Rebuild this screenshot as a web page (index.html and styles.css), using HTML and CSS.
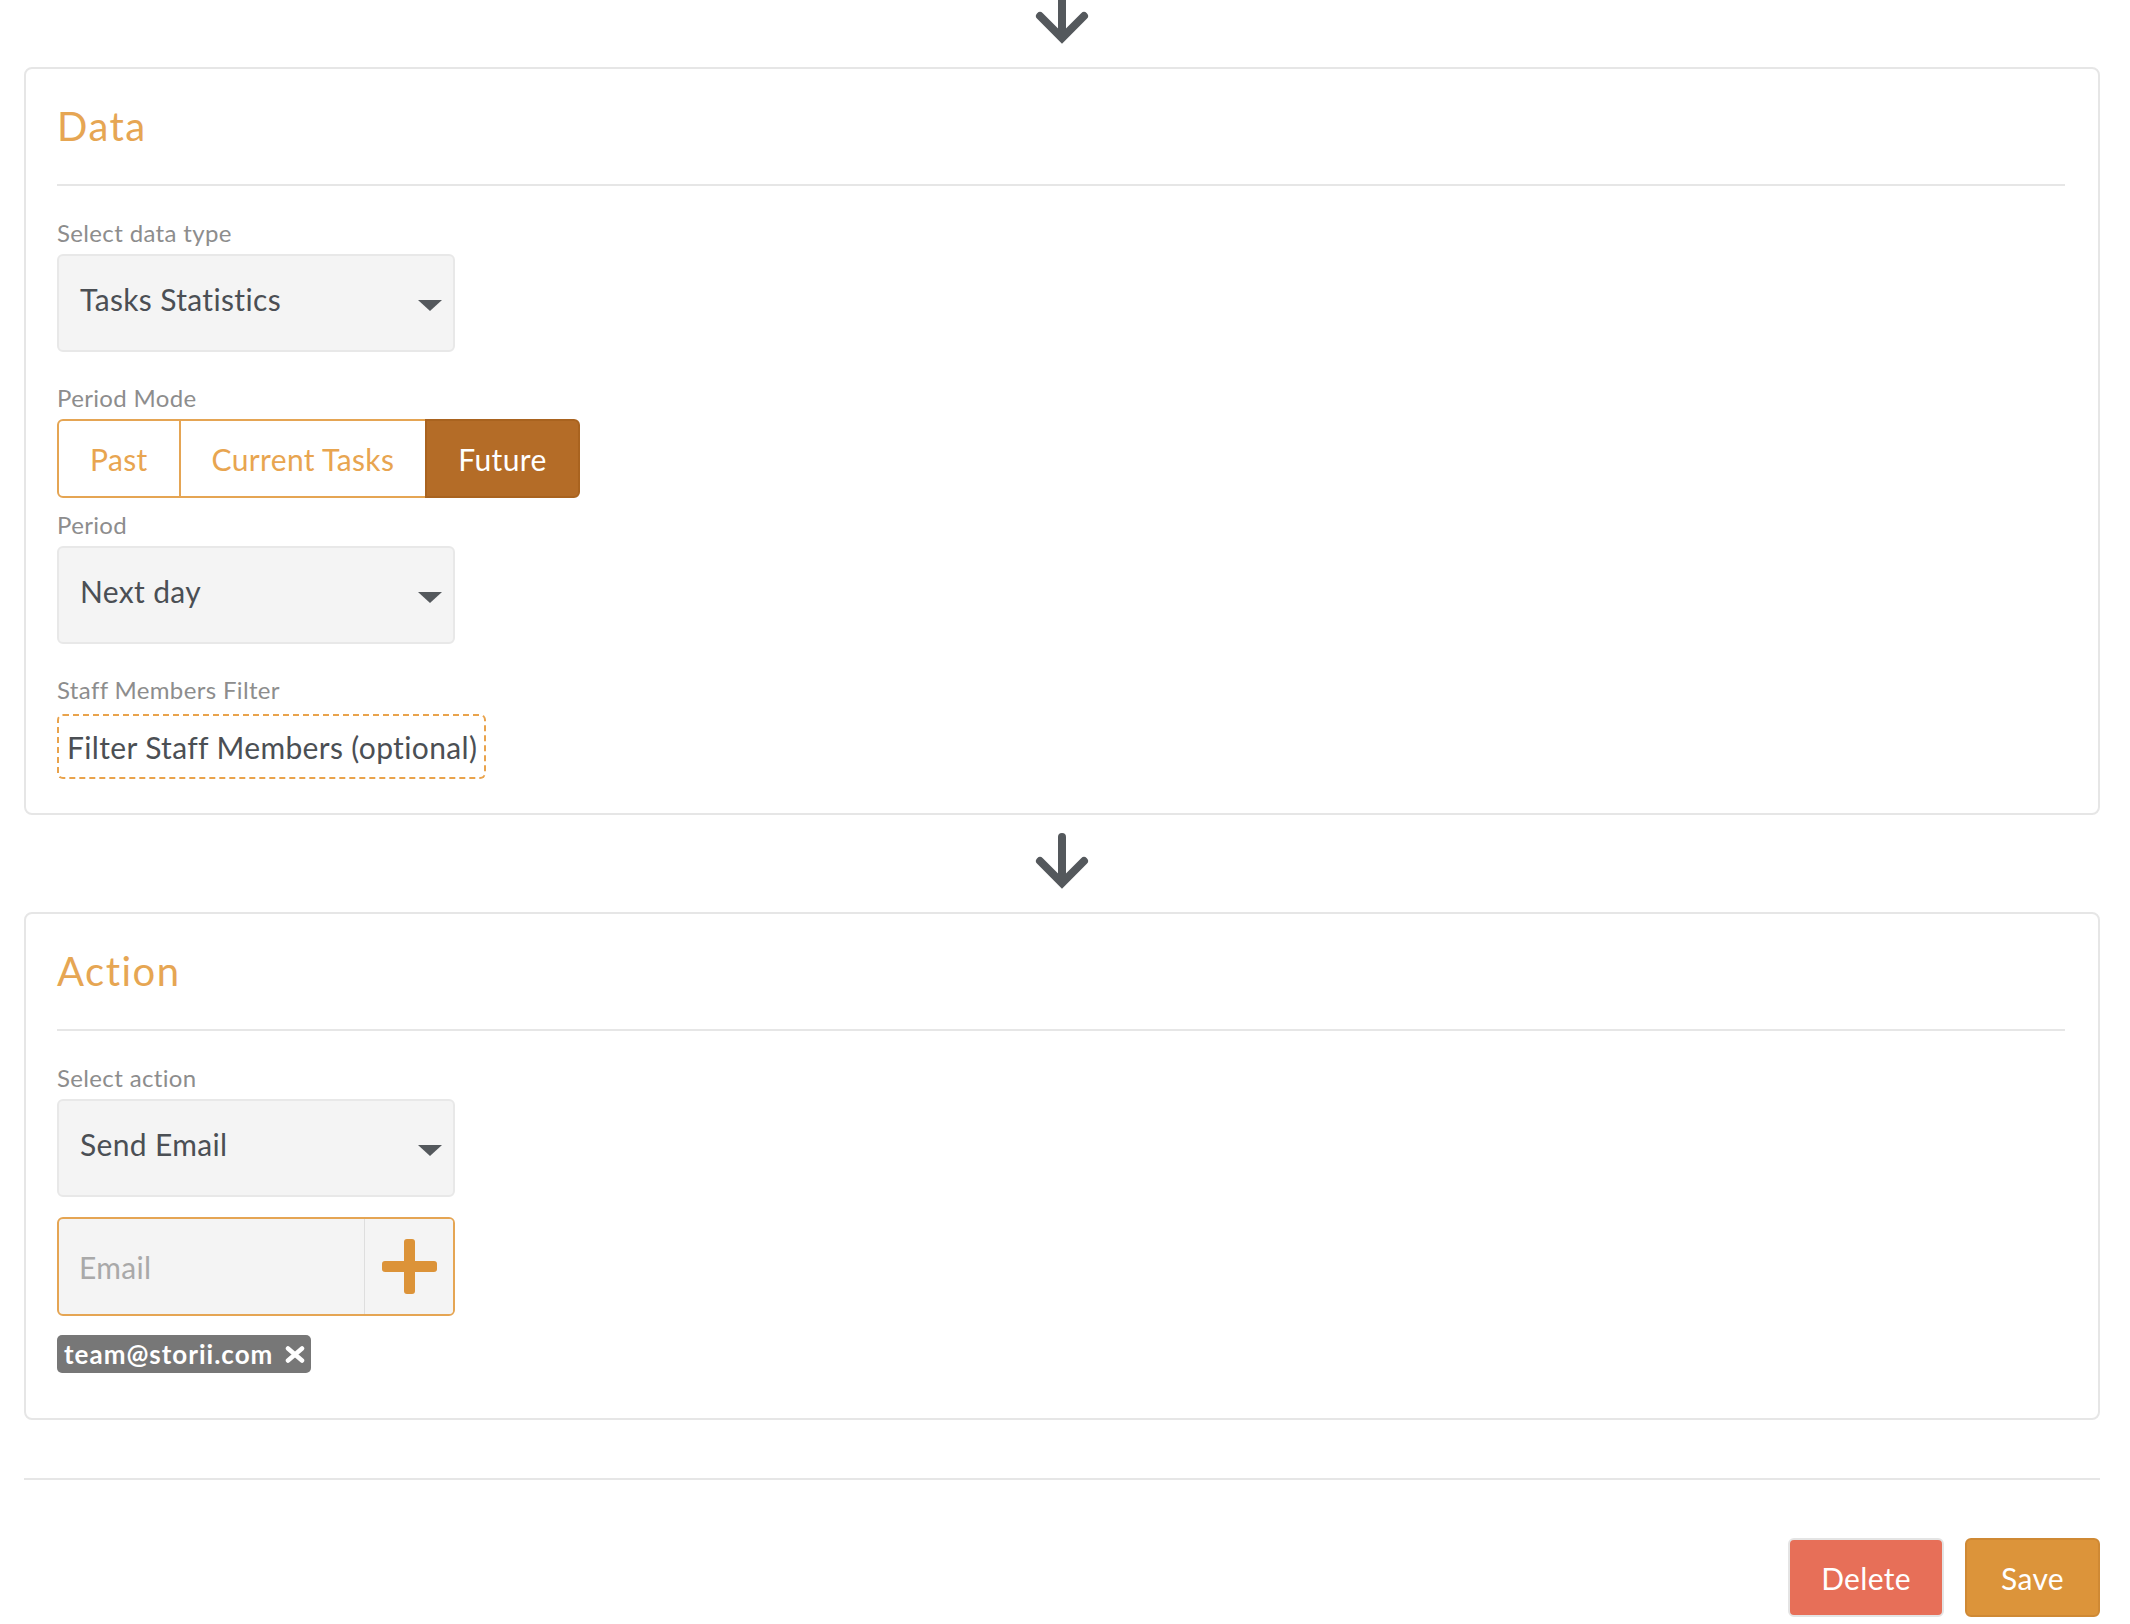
FILE: index.html
```html
<!DOCTYPE html>
<html lang="en">
<head>
  <meta charset="UTF-8" />
  <meta name="viewport" content="width=device-width, initial-scale=1.0"/>
  <title>Report Automation</title>
  <link rel="stylesheet" href="styles.css">
</head>
<body>
  <div class="page">

    <div class="flow-arrow first">
      <svg width="60" height="60" viewBox="0 0 60 60"><path d="M30 7 V50 M8 31 L30 53 L52 31" fill="none" stroke="#54585c" stroke-width="8" stroke-linecap="round" stroke-linejoin="miter"/></svg>
    </div>

    <div class="card">
      <h2 class="card-title">Data</h2>

      <div class="field">
        <label class="field-label">Select data type</label>
        <div class="select">
          <span class="select-value">Tasks Statistics</span>
          <span class="caret"></span>
        </div>
      </div>

      <div class="field field-mode">
        <label class="field-label">Period Mode</label>
        <div class="segmented">
          <button>Past</button>
          <button>Current Tasks</button>
          <button class="active">Future</button>
        </div>
      </div>

      <div class="field">
        <label class="field-label">Period</label>
        <div class="select">
          <span class="select-value">Next day</span>
          <span class="caret"></span>
        </div>
      </div>

      <div class="field">
        <label class="field-label">Staff Members Filter</label>
        <div class="staff-filter">Filter Staff Members (optional)</div>
      </div>
    </div>

    <div class="flow-arrow">
      <svg width="60" height="60" viewBox="0 0 60 60"><path d="M30 7 V50 M8 31 L30 53 L52 31" fill="none" stroke="#54585c" stroke-width="8" stroke-linecap="round" stroke-linejoin="miter"/></svg>
    </div>

    <div class="card">
      <h2 class="card-title">Action</h2>

      <div class="field">
        <label class="field-label">Select action</label>
        <div class="select">
          <span class="select-value">Send Email</span>
          <span class="caret"></span>
        </div>
        <div class="email-input">
          <input type="text" placeholder="Email">
          <button class="add-btn">
            <svg width="55" height="55" viewBox="0 0 55 55"><rect x="0" y="22" width="55" height="11" rx="3" fill="#dc9338"/><rect x="22" y="0" width="11" height="55" rx="3" fill="#dc9338"/></svg>
          </button>
        </div>
        <div class="tags">
          <span class="tag">team@storii.com
            <svg width="20" height="17" viewBox="0 0 20 17"><path d="M3 2.5 L17 14.5 M17 2.5 L3 14.5" stroke="#fff" stroke-width="4.5" stroke-linecap="round"/></svg>
          </span>
        </div>
      </div>
    </div>

    <hr class="footer-rule">

    <div class="footer-actions">
      <button class="btn btn-delete">Delete</button>
      <button class="btn btn-save">Save</button>
    </div>

  </div>
</body>
</html>
```

FILE: styles.css
```css
body {
  margin: 0;
  font-family: Lato, "Open Sans", sans-serif;
  letter-spacing: 0.022em;
  background-color: #ffffff;
  color: #4b4f54;
}

.page {
  margin: 0 30px 0 24px;
}

.flow-arrow {
  display: flex;
  justify-content: center;
  padding: 15px 0 22px;
}

.flow-arrow.first {
  margin-top: -30px;
}

.card {
  border: 2px solid #e6e6e6;
  border-radius: 8px;
  padding: 33px 33px 34px 31px;
}

.card-title {
  margin: 0 0 32px;
  padding-bottom: 34px;
  border-bottom: 2px solid #e6e6e6;
  font-size: 40px;
  line-height: 48px;
  font-weight: normal;
  letter-spacing: 1.5px;
  color: #e6a653;
}

.field {
  margin-bottom: 31px;
}

.field-mode {
  margin-bottom: 12px;
}

.card .field:last-child {
  margin-bottom: 0;
}

.field-label {
  display: block;
  font-size: 24px;
  line-height: 29px;
  color: #8d8d8d;
  margin-bottom: 7px;
}

.select {
  display: flex;
  align-items: center;
  justify-content: space-between;
  box-sizing: border-box;
  width: 398px;
  height: 98px;
  padding: 0 11px 0 21px;
  background-color: #f4f4f4;
  border: 2px solid #e8e8e8;
  border-radius: 6px;
  font-size: 30px;
  line-height: 36px;
}

.select-value {
  margin-bottom: 9px;
}

.caret {
  width: 0;
  height: 0;
  border-left: 12px solid transparent;
  border-right: 12px solid transparent;
  border-top: 11px solid #54585c;
  margin-top: 5px;
}

.segmented {
  display: flex;
  width: fit-content;
}

.segmented button {
  height: 79px;
  margin-left: -2px;
  padding: 0 31px;
  font-family: inherit;
  font-size: 30px;
  letter-spacing: inherit;
  color: #e8a550;
  background-color: #ffffff;
  border: 2px solid #e5a553;
}

.segmented button:first-child {
  margin-left: 0;
  border-radius: 6px 0 0 6px;
}

.segmented button:last-child {
  border-radius: 0 6px 6px 0;
}

.segmented button.active {
  background-color: #b46c27;
  border-color: #a9631f;
  color: #ffffff;
}

.staff-filter {
  display: flex;
  align-items: center;
  width: fit-content;
  box-sizing: border-box;
  height: 65px;
  margin-top: 10px;
  padding: 0 7px 0 8px;
  border: 2px dashed #e9a34c;
  border-radius: 6px;
  font-size: 30px;
}

.email-input {
  display: flex;
  box-sizing: border-box;
  width: 398px;
  height: 99px;
  margin-top: 20px;
  background-color: #f4f4f4;
  border: 2px solid #e5a553;
  border-radius: 6px;
  overflow: hidden;
}

.email-input input {
  flex: 1;
  min-width: 0;
  padding: 0 0 0 20px;
  border: none;
  outline: none;
  background-color: transparent;
  font-family: inherit;
  font-size: 30px;
  letter-spacing: inherit;
  color: #4b4f54;
}

.email-input input::placeholder {
  color: #a9a9a9;
}

.add-btn {
  width: 89px;
  padding: 0;
  display: flex;
  align-items: center;
  justify-content: center;
  background-color: #f4f4f4;
  border: none;
  border-left: 1px solid #dedede;
}

.tags {
  display: flex;
  margin-top: 19px;
  margin-bottom: 11px;
}

.tag {
  display: inline-flex;
  align-items: center;
  gap: 12px;
  height: 38px;
  padding: 0 6px 0 7px;
  background-color: #777777;
  border-radius: 5px;
  color: #ffffff;
  font-size: 26px;
  font-weight: bold;
  letter-spacing: 1px;
}

.footer-rule {
  border: none;
  border-top: 2px solid #e6e6e6;
  margin: 58px 0;
}

.footer-actions {
  display: flex;
  justify-content: flex-end;
  gap: 21px;
}

.btn {
  height: 79px;
  padding: 0 31px;
  font-family: inherit;
  font-size: 30px;
  letter-spacing: inherit;
  color: #ffffff;
  border: 2px solid;
  border-radius: 6px;
}

.btn-delete {
  background-color: #e76f58;
  border-color: #e4e4e4;
}

.btn-save {
  padding: 0 34px;
  background-color: #dc943a;
  border-color: #cf8934;
}
```
